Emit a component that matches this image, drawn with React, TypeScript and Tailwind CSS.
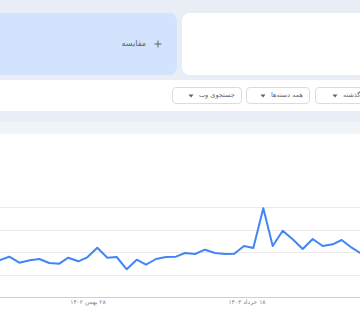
import React from "react";

const pts: [number, number][] = [
  [0, 126], [9.3, 122.7], [19.3, 128.7], [30, 126.3], [39.3, 125], [49.3, 129], [59.3, 129.7],
  [68.3, 123.7], [78.3, 127.3], [87.3, 123.3], [97.3, 113.7], [107.3, 123.7], [116.7, 123],
  [126.7, 135.3], [136.7, 125.7], [146, 130.7], [156, 125], [166, 123], [176, 122.7], [185, 119],
  [195, 120], [205, 115.7], [215, 119], [225, 120], [234.3, 119.7], [244, 112], [253.3, 114],
  [263.3, 74.3], [272.7, 112], [282.7, 96.7], [292.7, 105.3], [302.7, 115], [312.7, 105],
  [322.7, 112], [332.7, 110.3], [341.7, 106], [351.7, 113.7], [361.7, 120],
];

function Caret() {
  return (
    <svg width="6" height="4" viewBox="0 0 6 4" className="shrink-0">
      <path d="M0.5 0.5 L5.5 0.5 L3 3.5 Z" fill="#5f6368" />
    </svg>
  );
}

function Drop({ label, w, pl }: { label: string; w: string; pl: string }) {
  return (
    <div
      className={`${w} ${pl} h-[17px] shrink-0 rounded-[4px] border border-[#dadce0] bg-white flex items-center gap-[5px] pr-[8px]`}
    >
      <Caret />
      <span dir="rtl" className="flex-1 text-right text-[6.5px] leading-none text-[#5f6368] whitespace-nowrap">
        {label}
      </span>
    </div>
  );
}

export default function App() {
  return (
    <div
      className="w-[360px] h-[320px] overflow-hidden bg-white"
      style={{ fontFamily: '"DejaVu Sans", "Noto Sans", sans-serif' }}
    >
      <div className="h-[80px] bg-[#e9eef6] pt-[13px] flex gap-[5px]">
        <div className="ml-[-10px] w-[187px] h-[62px] shrink-0 rounded-[8px] bg-[#d3e3fd] flex items-center justify-end pr-[15px] gap-[8px]">
          <span dir="rtl" className="text-[8px] leading-none text-[#5f6368]">
            مقایسه
          </span>
          <svg width="8" height="8" viewBox="0 0 8 8">
            <path d="M4 0.5 V7.5 M0.5 4 H7.5" stroke="#5f6368" strokeWidth="1" />
          </svg>
        </div>
        <div className="w-[200px] h-[62px] shrink-0 rounded-[8px] bg-white" />
      </div>
      <div className="h-[31px] flex items-center pl-[172px]">
        <div className="flex gap-[4px]">
          <Drop label="جستجوی وب" w="w-[70px]" pl="pl-[15px]" />
          <Drop label="همه دسته‌ها" w="w-[64px]" pl="pl-[13px]" />
          <div className="ml-[1px]">
            <Drop label="۱۲ ماه گذشته" w="w-[60px]" pl="pl-[16px]" />
          </div>
        </div>
      </div>
      <div className="h-[11px] bg-[#e9eef6]" />
      <div className="h-[12px] bg-[#f1f4f9]" />
      <svg width="360" height="186" viewBox="0 0 360 186" className="block">
        {[73, 96, 118, 141].map((y) => (
          <line key={y} x1="0" x2="360" y1={y + 0.5} y2={y + 0.5} stroke="#ebebeb" strokeWidth="1" />
        ))}
        <line x1="0" x2="360" y1="163.5" y2="163.5" stroke="#cfcfcf" strokeWidth="1" />
        <polyline
          points={pts.map((p) => p.join(",")).join(" ")}
          fill="none"
          stroke="#4285f4"
          strokeWidth="2"
          strokeLinejoin="round"
          strokeLinecap="round"
        />
        <text x="88" y="170" fontSize="6" fill="#80868b" textAnchor="middle" direction="rtl">
          ۲۸ بهمن ۱۴۰۲
        </text>
        <text x="247" y="170" fontSize="6" fill="#80868b" textAnchor="middle" direction="rtl">
          ۱۸ خرداد ۱۴۰۳
        </text>
      </svg>
    </div>
  );
}
